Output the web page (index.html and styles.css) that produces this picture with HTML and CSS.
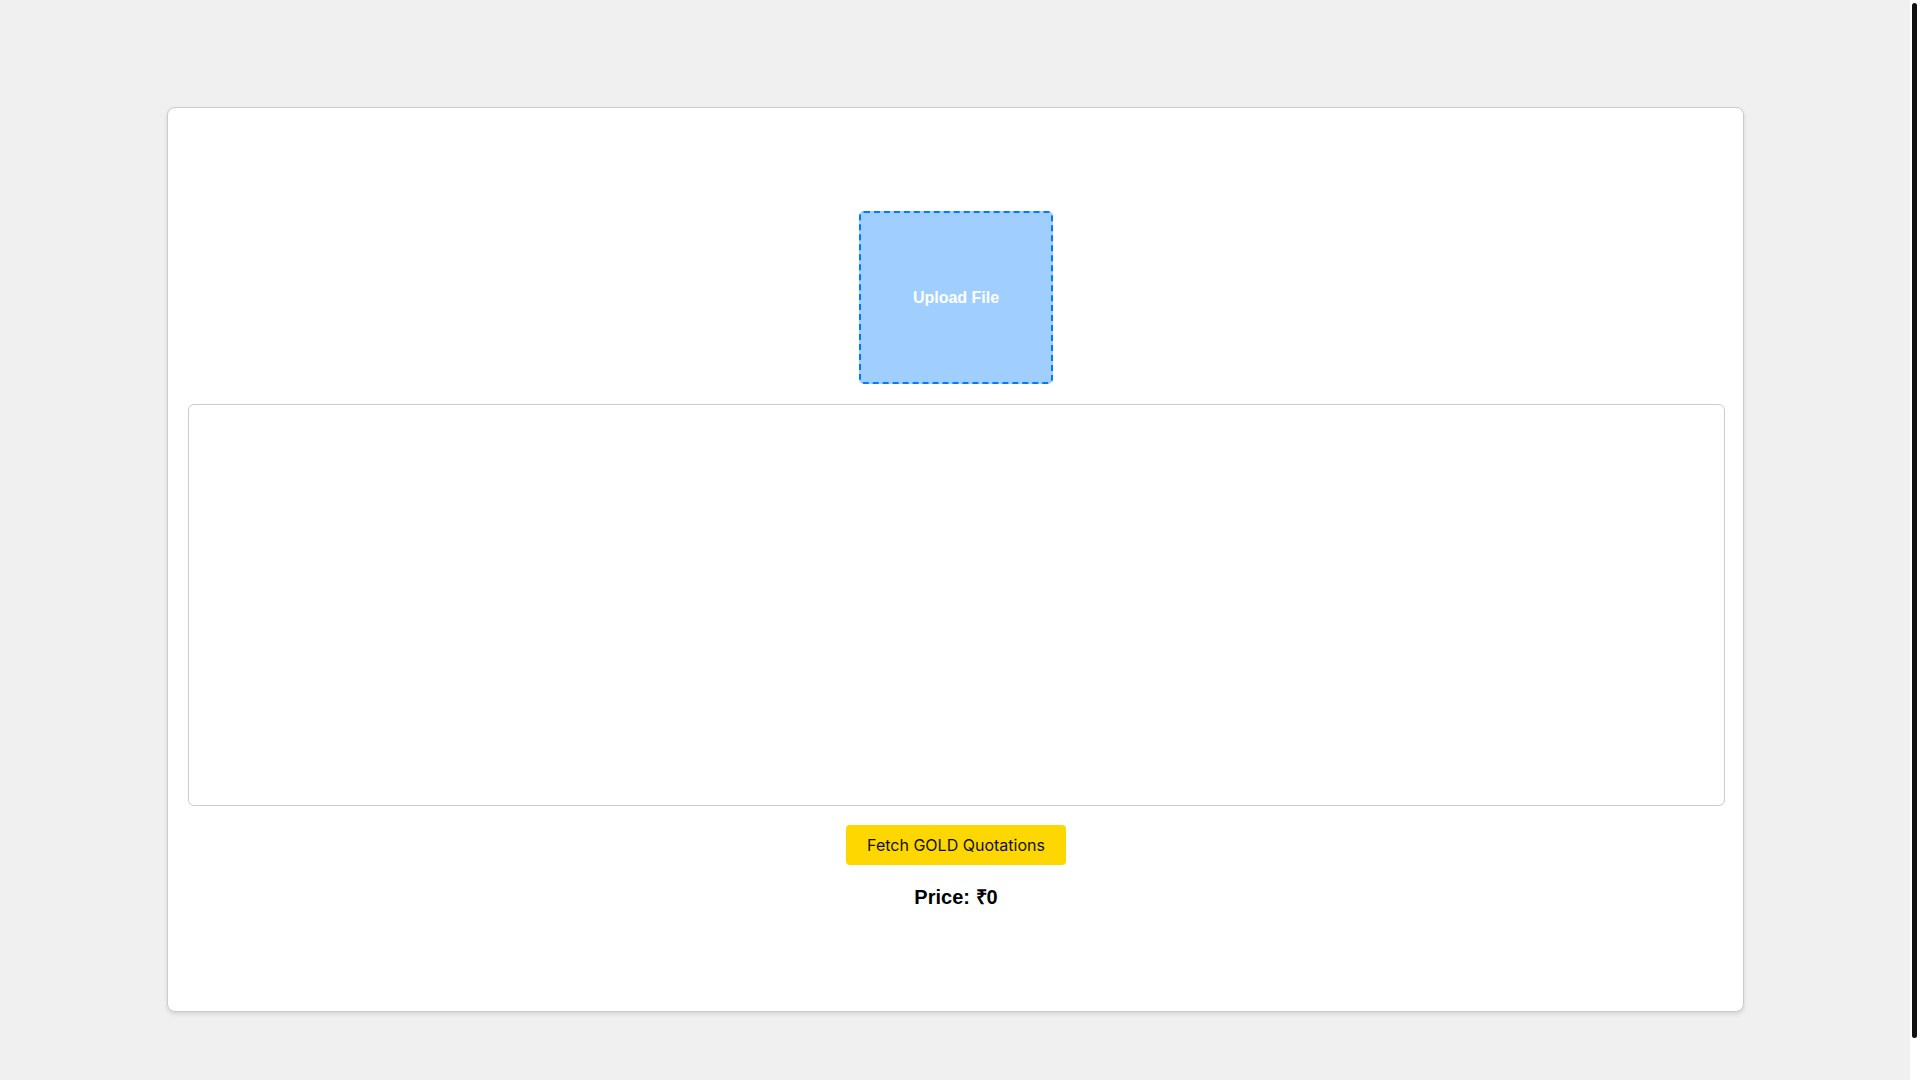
FILE: index.html
```html
<!DOCTYPE html>
<html lang="en">
<head>
<meta charset="utf-8">
<title>Gold Quotations</title>
<link rel="stylesheet" href="styles.css">
</head>
<body>
<main class="card">
  <label class="upload">
    <span class="upload-text">Upload File</span>
  </label>
  <div class="preview"></div>
  <button class="fetch-btn" type="button">Fetch GOLD Quotations</button>
  <p class="price">Price: ₹0</p>
</main>
<div class="scrollbar" aria-hidden="true"><div class="scrollbar-thumb"></div></div>
</body>
</html>
```

FILE: styles.css
```css
html {
  background: #f0f0f0;
}
body {
  margin: 0;
  padding: 107px 10px 115px 0;
  background: #f0f0f0;
  font-family: "Liberation Sans", Arial, sans-serif;
}
.card {
  box-sizing: border-box;
  width: 1577px;
  margin: 0 auto;
  padding: 103px 18px 102px 20px;
  background: #ffffff;
  border: 1px solid #cccccc;
  border-radius: 8px;
  box-shadow: 0 2px 4px rgba(0, 0, 0, 0.12);
  display: flex;
  flex-direction: column;
  align-items: center;
}
.upload {
  box-sizing: border-box;
  width: 194px;
  height: 173px;
  border: 2px dashed #007bff;
  border-radius: 5px;
  background: #a0cfff;
  display: flex;
  align-items: center;
  justify-content: center;
  cursor: pointer;
}
.upload-text {
  color: #ffffff;
  font-weight: bold;
  font-size: 16px;
}
.preview {
  box-sizing: border-box;
  align-self: stretch;
  height: 402px;
  margin-top: 20px;
  border: 1px solid #cccccc;
  border-radius: 6px;
}
.fetch-btn {
  margin-top: 19px;
  height: 40px;
  padding: 0 21.5px;
  border: none;
  border-radius: 4px;
  background: #ffd700;
  color: #111111;
  font-family: Inter, "Liberation Sans", sans-serif;
  font-size: 16px;
  cursor: pointer;
}
.price {
  margin: 21px 0 0;
  font-size: 20px;
  font-weight: bold;
  line-height: 23px;
  color: #000000;
}
.scrollbar {
  position: fixed;
  top: 0;
  right: 0;
  width: 10px;
  height: 100vh;
  background: #ffffff;
}
.scrollbar-thumb {
  position: absolute;
  top: 3px;
  left: 2px;
  width: 5px;
  height: 1035px;
  background: #111111;
  border-radius: 3px;
}
```
